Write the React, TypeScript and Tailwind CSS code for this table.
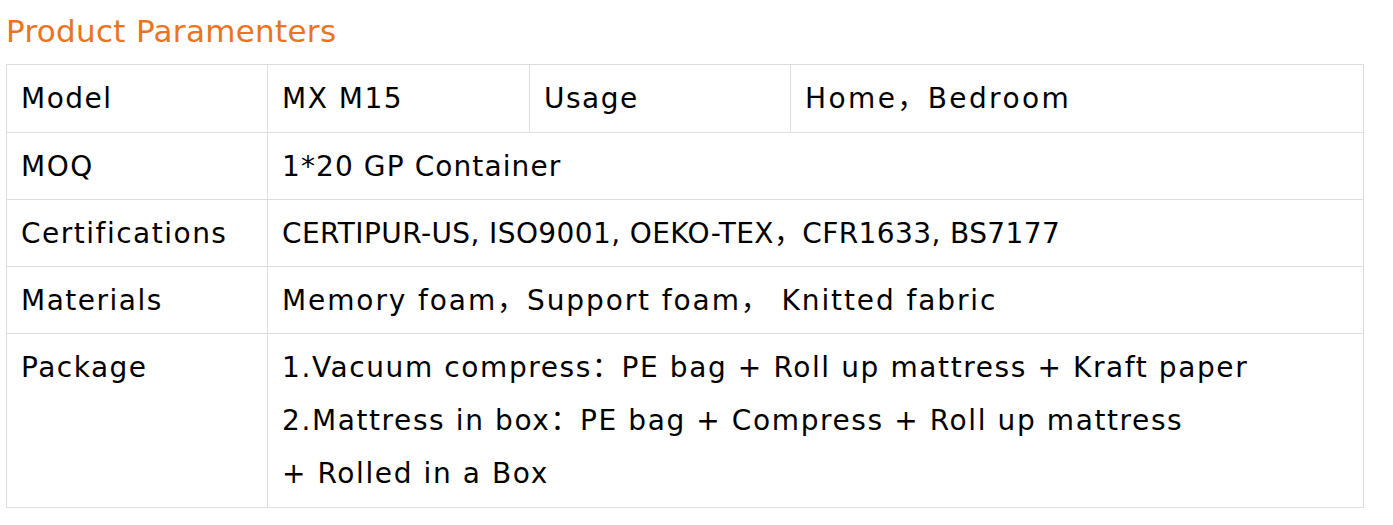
const rows: { label: string; value: React.ReactNode; pad: string; track: string }[] = [
  { label: "MOQ", value: "1*20 GP Container", pad: "py-[6.5px]", track: "tracking-[1.1px]" },
  {
    label: "Certifications",
    value: "CERTIPUR-US, ISO9001, OEKO-TEX，CFR1633, BS7177",
    pad: "py-[6.5px]",
    track: "tracking-[0.4px]",
  },
  {
    label: "Materials",
    value: "Memory foam，Support foam， Knitted fabric",
    pad: "py-[6.5px]",
    track: "tracking-[1.9px]",
  },
  {
    label: "Package",
    pad: "py-[7px]",
    track: "tracking-[1.6px]",
    value: (
      <>
        1.Vacuum compress：PE bag + Roll up mattress + Kraft paper
        <br />
        2.Mattress in box：PE bag + Compress + Roll up mattress
        <br />+ Rolled in a Box
      </>
    ),
  },
]

const cell = "border border-[#dddddd] px-[14px] align-top"

export default function App() {
  return (
    <div
      className="bg-white pl-[6px] pr-[29px] pt-[12px] text-black"
      style={{ fontFamily: '"DejaVu Sans", "Noto Sans CJK SC", sans-serif' }}
    >
      <h2 className="text-[31px] leading-[38px] tracking-[0.3px] text-[#ea7420]">Product Paramenters</h2>
      <table className="mt-[14px] w-[1358px] table-fixed border-collapse text-[28px] leading-[53px] tracking-[1.5px]">
        <colgroup>
          <col className="w-[261px]" />
          <col className="w-[262px]" />
          <col className="w-[261px]" />
          <col />
        </colgroup>
        <tbody>
          <tr>
            <td className={`${cell} py-[7px]`}>Model</td>
            <td className={`${cell} py-[7px]`}>MX M15</td>
            <td className={`${cell} py-[7px]`}>Usage</td>
            <td className={`${cell} py-[7px] tracking-[2.4px]`}>Home，Bedroom</td>
          </tr>
          {rows.map((r) => (
            <tr key={r.label}>
              <td className={`${cell} ${r.pad}`}>{r.label}</td>
              <td className={`${cell} ${r.pad} ${r.track}`} colSpan={3}>
                {r.value}
              </td>
            </tr>
          ))}
        </tbody>
      </table>
    </div>
  )
}
